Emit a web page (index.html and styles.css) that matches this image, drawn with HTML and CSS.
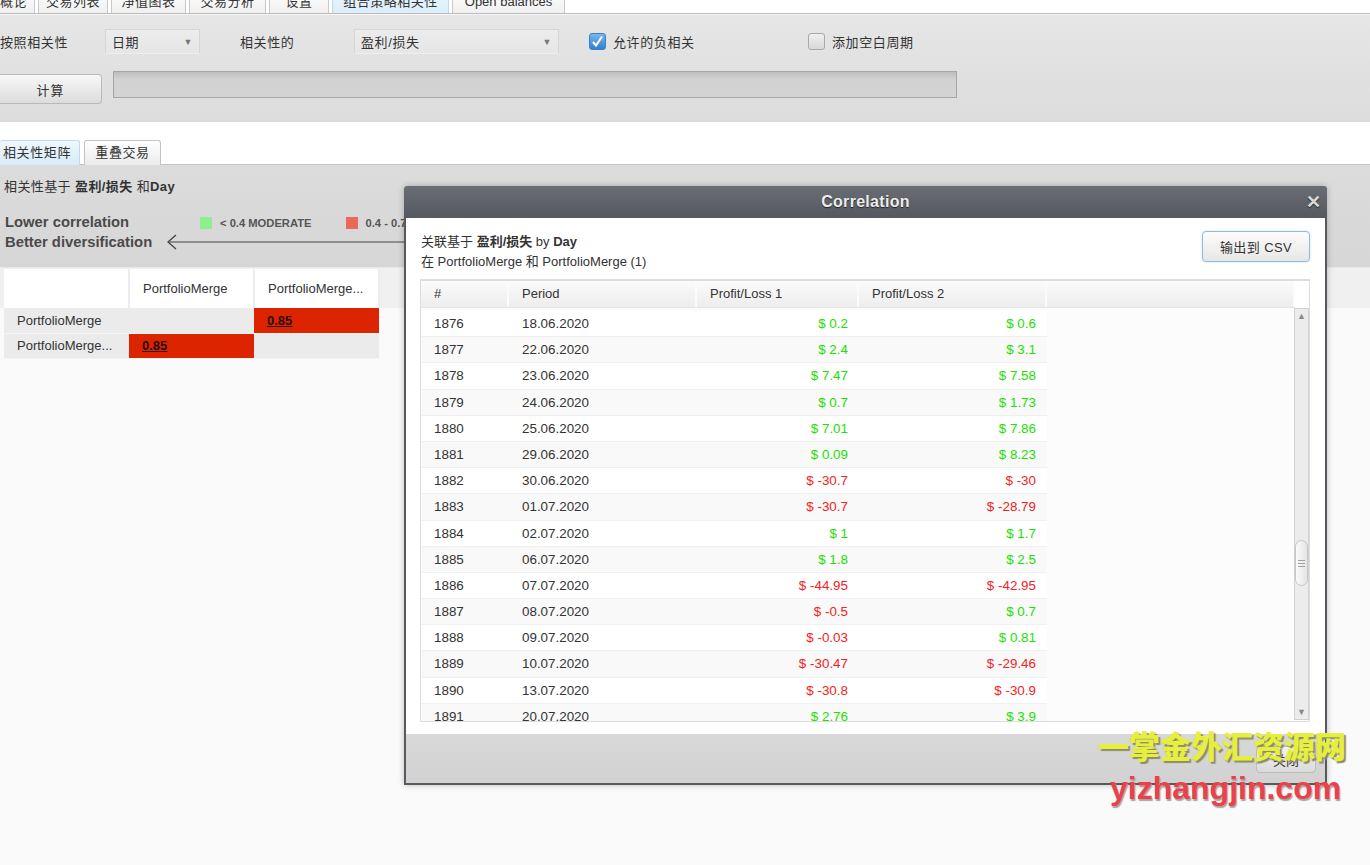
FILE: index.html
```html
<!DOCTYPE html>
<html lang="zh">

<head>
  <meta charset="UTF-8" />
  <title>Correlation</title>
  <link rel="stylesheet" href="styles.css">
</head>

<body>
  <div class="main-tabs">
    <div class="tab t1">概论</div>
    <div class="tab t2">交易列表</div>
    <div class="tab t3">净值图表</div>
    <div class="tab t4">交易分析</div>
    <div class="tab t5">设置</div>
    <div class="tab t6 active">组合策略相关性</div>
    <div class="tab t7">Open balances</div>
  </div>

  <div class="toolbar">
    <div class="tool-row">
      <span class="label label-by">按照相关性</span>
      <div class="select select-period">日期<span class="arrow">▼</span></div>
      <span class="label label-of">相关性的</span>
      <div class="select select-value">盈利/损失<span class="arrow">▼</span></div>
      <div class="check check-neg">
        <span class="box checked">
          <svg width="13" height="13" viewBox="0 0 13 13"><path d="M2 7 L5 10.5 L11 1.5" fill="none" stroke="#fff" stroke-width="2" /></svg>
        </span>
        允许的负相关
      </div>
      <div class="check">
        <span class="box"></span>
        添加空白周期
      </div>
    </div>
    <div class="tool-row">
      <button class="calc-button">计算</button>
      <div class="progress"></div>
    </div>
  </div>

  <div class="sub-tabs">
    <div class="sub-tab active">相关性矩阵</div>
    <div class="sub-tab">重叠交易</div>
  </div>

  <div class="info-panel">
    <p class="info-title">相关性基于 <b>盈利/损失</b> 和<b>Day</b></p>
    <div class="scale">
      <div class="scale-left">
        <div>Lower correlation</div>
        <div>Better diversification</div>
      </div>
      <div class="scale-right">
        <div class="legend">
          <span class="legend-item"><span class="swatch green"></span>&lt; 0.4 MODERATE</span>
          <span class="legend-item"><span class="swatch red"></span>0.4 - 0.7 HIGH</span>
          <span class="legend-item"><span class="swatch dark"></span>&gt; 0.7 VERY HIGH</span>
        </div>
        <svg class="scale-arrow" width="940" height="16" viewBox="0 0 940 16">
          <path d="M9 1 L1 8 L9 15" fill="none" stroke="#444" stroke-width="1.3" />
          <line x1="1" y1="8" x2="940" y2="8" stroke="#444" stroke-width="1.2" />
        </svg>
      </div>
    </div>
  </div>

  <div class="matrix-area">
    <table class="matrix">
      <tr class="matrix-head">
        <th></th>
        <th>PortfolioMerge</th>
        <th>PortfolioMerge...</th>
      </tr>
      <tr>
        <td>PortfolioMerge</td>
        <td></td>
        <td class="hot"><u>0.85</u></td>
      </tr>
      <tr>
        <td>PortfolioMerge...</td>
        <td class="hot"><u>0.85</u></td>
        <td></td>
      </tr>
    </table>
  </div>

  <div class="dialog">
    <div class="dialog-title">
      Correlation
      <span class="dialog-close">✕</span>
    </div>
    <div class="dialog-body">
      <div class="dialog-head">
        <div class="dialog-info">
          <div>关联基于 <b>盈利/损失</b> by <b>Day</b></div>
          <div>在 PortfolioMerge 和 PortfolioMerge (1)</div>
        </div>
        <button class="csv-button">输出到 CSV</button>
      </div>

      <div class="grid">
        <div class="grid-head">
          <div class="c-num">#</div>
          <div class="c-date">Period</div>
          <div class="c-pl">Profit/Loss 1</div>
          <div class="c-pl2">Profit/Loss 2</div>
          <div class="c-rest"></div>
        </div>
        <div class="grid-main">
          <div class="grid-rows" id="rows"></div>
          <div class="scrollbar">
            <span class="sb-up">▲</span>
            <span class="sb-thumb"><i></i><i></i><i></i></span>
            <span class="sb-down">▼</span>
          </div>
        </div>
      </div>
    </div>
    <div class="dialog-foot">
      <button class="close-button">关闭</button>
    </div>
  </div>

  <div class="watermark">
    <div class="wm-cn">一掌金外汇资源网</div>
    <div class="wm-en">yizhangjin.com</div>
  </div>

  <script>
    const data = [
      [1876, "18.06.2020", 0.2, 0.6],
      [1877, "22.06.2020", 2.4, 3.1],
      [1878, "23.06.2020", 7.47, 7.58],
      [1879, "24.06.2020", 0.7, 1.73],
      [1880, "25.06.2020", 7.01, 7.86],
      [1881, "29.06.2020", 0.09, 8.23],
      [1882, "30.06.2020", -30.7, -30],
      [1883, "01.07.2020", -30.7, -28.79],
      [1884, "02.07.2020", 1, 1.7],
      [1885, "06.07.2020", 1.8, 2.5],
      [1886, "07.07.2020", -44.95, -42.95],
      [1887, "08.07.2020", -0.5, 0.7],
      [1888, "09.07.2020", -0.03, 0.81],
      [1889, "10.07.2020", -30.47, -29.46],
      [1890, "13.07.2020", -30.8, -30.9],
      [1891, "20.07.2020", 2.76, 3.9]
    ];

    function money(v) {
      const cls = v < 0 ? 'neg' : 'pos';
      return '<span class="' + cls + '">$ ' + v + '</span>';
    }

    const rows = document.getElementById('rows');
    rows.innerHTML = data.map(r =>
      '<div class="grid-row">' +
      '<div class="c-num">' + r[0] + '</div>' +
      '<div class="c-date">' + r[1] + '</div>' +
      '<div class="c-pl">' + money(r[2]) + '</div>' +
      '<div class="c-pl2">' + money(r[3]) + '</div>' +
      '</div>'
    ).join('');
  </script>
</body>

</html>
```

FILE: styles.css
```css
* {
  margin: 0;
  padding: 0;
  box-sizing: border-box;
}

body {
  width: 1370px;
  height: 865px;
  overflow: hidden;
  position: relative;
  background: #fafafa;
  font-family: 'Liberation Sans', 'Noto Sans CJK SC', sans-serif;
  font-size: 13px;
  color: #333;
}

button {
  font-family: inherit;
  font-size: 13px;
  color: #333;
}

/* top tabs, scrolled half out of view */
.main-tabs {
  height: 14px;
  overflow: hidden;
  display: flex;
  align-items: flex-end;
  gap: 3px;
  background: #fff;
  border-bottom: 1px solid #bcbcbc;
}

.tab {
  height: 24px;
  line-height: 24px;
  border: 1px solid #c8c8c8;
  border-bottom: none;
  background: linear-gradient(#ffffff, #f0f0f0);
  text-align: center;
  color: #333;
  letter-spacing: 0.5px;
}

.tab.active {
  background: linear-gradient(#eaf5fd, #dbeefb);
  border-color: #c2d8e8;
}

.t1 { width: 35px; text-align: left; border-left: none; }
.t2 { width: 70px; }
.t3 { width: 75px; }
.t4 { width: 77px; }
.t5 { width: 60px; }
.t6 { width: 117px; }
.t7 { width: 113px; letter-spacing: 0; }

/* toolbar */
.toolbar {
  height: 108px;
  padding-top: 14px;
  border-top: 1px solid #f6f6f6;
  background: linear-gradient(#e6e6e6, #dcdcdc);
}

.tool-row {
  display: flex;
  align-items: center;
}

.tool-row + .tool-row {
  margin-top: 17px;
  align-items: flex-start;
}

.label {
  letter-spacing: 0.6px;
  color: #333;
}

.label-by { width: 105px; }
.label-of { width: 114px; }

.select {
  height: 25px;
  line-height: 25px;
  padding-left: 6px;
  position: relative;
  background: linear-gradient(#ececec, #e6e6e6);
  border: 1px solid #d6d6d6;
  border-bottom-color: #eeeeee;
  letter-spacing: 0.6px;
}

.select .arrow {
  position: absolute;
  right: 6px;
  top: 0;
  font-size: 9px;
  color: #777;
}

.select-period {
  width: 95px;
  margin-right: 40px;
}

.select-value {
  width: 205px;
  margin-right: 30px;
}

.check {
  display: flex;
  align-items: center;
  gap: 7px;
  width: 219px;
  letter-spacing: 0.6px;
}

.box {
  width: 17px;
  height: 17px;
  border-radius: 3px;
  border: 1px solid #a9a9a9;
  background: linear-gradient(#f0f0f0, #d8d8d8);
  display: flex;
  align-items: center;
  justify-content: center;
}

.box.checked {
  border-color: #3d7fc4;
  background: linear-gradient(#79b6ec, #2f80d2);
}

.calc-button {
  width: 102px;
  height: 30px;
  margin-top: 3px;
  border: 1px solid #b9b9b9;
  border-left: none;
  border-radius: 0 4px 4px 0;
  background: linear-gradient(#f8f8f8, #dcdcdc);
  letter-spacing: 1px;
}

.progress {
  width: 844px;
  height: 27px;
  margin-left: 11px;
  border: 1px solid #a6a6a6;
  background: linear-gradient(#bdbdbd, #d2d2d2 30%, #d4d4d4);
}

/* sub tabs */
.sub-tabs {
  height: 43px;
  padding-top: 18px;
  display: flex;
  gap: 4px;
  background: #fff;
  border-bottom: 1px solid #c4c4c4;
}

.sub-tab {
  height: 25px;
  line-height: 24px;
  width: 77px;
  text-align: center;
  border: 1px solid #c4c4c4;
  border-bottom: none;
  border-radius: 3px 3px 0 0;
  background: linear-gradient(#ffffff, #ebebeb);
  letter-spacing: 0.6px;
}

.sub-tab.active {
  width: 80px;
  text-align: left;
  padding-left: 3px;
  border-left: none;
  border-color: #c4d8e6;
  background: linear-gradient(#eef7fd, #d8ebf8);
}

/* info panel */
.info-panel {
  height: 103px;
  padding: 13px 0 0 4px;
  background: linear-gradient(#dcdcdc, #d6d6d6);
  border-bottom: 1px solid #e9e9e9;
}

.info-title {
  line-height: 18px;
  letter-spacing: 0.4px;
}

.scale {
  display: flex;
  margin-top: 16px;
}

.scale-left {
  width: 163px;
  font-size: 14.8px;
  font-weight: bold;
  color: #4a4a4a;
  line-height: 20px;
  padding-left: 1px;
}

.scale-right {
  flex: 1;
}

.legend {
  height: 22px;
  display: flex;
  align-items: center;
  gap: 34px;
  padding-left: 33px;
}

.legend-item {
  display: flex;
  align-items: center;
  gap: 8px;
  font-size: 11.2px;
  font-weight: bold;
  color: #555;
}

.swatch {
  width: 12px;
  height: 12px;
}

.swatch.green { background: #8ef08c; }
.swatch.red { background: #e96a58; }
.swatch.dark { background: #d22a10; }

.scale-arrow {
  display: block;
  margin-top: 0;
}

/* correlation matrix */
.matrix-area {
  padding: 1px 0 0 4px;
  background: linear-gradient(#f0f0f0 0, #f0f0f0 40px, #fafafa 40px);
  height: 200px;
}

.matrix {
  border-collapse: collapse;
}

.matrix th,
.matrix td {
  width: 125px;
  text-align: left;
  font-weight: normal;
  padding-left: 13px;
  white-space: nowrap;
  color: #333;
}

.matrix th {
  height: 39px;
  background: #fff;
  border-right: 2px solid #ececec;
}

.matrix td {
  height: 25px;
  background: #ebebeb;
  border-bottom: 1px solid #f4f4f4;
}

.matrix td.hot {
  background: #dc2500;
  font-weight: bold;
  color: #2a0a02;
}

/* dialog window */
.dialog {
  position: absolute;
  left: 404px;
  top: 186px;
  width: 923px;
  height: 599px;
  border: 2px solid #56595e;
  border-top: none;
  border-radius: 4px 4px 0 0;
  background: #fff;
  box-shadow: 0 0 6px rgba(0, 0, 0, 0.25);
  display: flex;
  flex-direction: column;
}

.dialog-title {
  height: 32px;
  margin: 0 -2px;
  line-height: 32px;
  text-align: center;
  border-radius: 4px 4px 0 0;
  background: linear-gradient(#6a6d73, #55585e);
  color: #ececec;
  font-size: 16px;
  font-weight: bold;
  letter-spacing: 0.3px;
  text-shadow: 0 1px 1px #222;
  position: relative;
}

.dialog-close {
  position: absolute;
  right: 6px;
  top: 0;
  font-size: 18px;
  color: #d8d8d8;
}

.dialog-body {
  flex: 1;
  padding: 13px 15px 0 14px;
}

.dialog-head {
  display: flex;
  justify-content: space-between;
  height: 48px;
}

.dialog-info {
  padding-top: 1px;
  line-height: 20px;
  padding-left: 1px;
}

.csv-button {
  width: 108px;
  height: 31px;
  border: 1px solid #93bbdd;
  border-radius: 4px;
  background: linear-gradient(#fdfdfd, #e6e6e6);
  box-shadow: 0 0 2px #b8d4ee;
  letter-spacing: 0.4px;
}

.grid {
  width: 890px;
  border: 1px solid #dddddd;
  border-top-width: 2px;
}

.grid-head {
  display: flex;
  height: 27px;
  width: 874px;
  line-height: 26px;
  background: linear-gradient(#fbfbfb, #ededed);
  border-bottom: 1px solid #e4e4e4;
}

.grid-head > div {
  padding-left: 13px;
  border-right: 2px solid #fbfbfb;
}

.c-num { width: 88px; }
.c-date { width: 188px; }
.c-pl { width: 162px; }
.c-pl2 { width: 188px; }
.c-rest { flex: 1; }

.grid-main {
  display: flex;
  height: 413px;
  background: #fcfcfc;
}

.grid-rows {
  width: 874px;
  height: 413px;
  padding-top: 3px;
  overflow: hidden;
}

.grid-row {
  display: flex;
  width: 626px;
  height: 26.2px;
  line-height: 25px;
  border-bottom: 1px solid #f0f0f0;
  background: #fff;
  font-size: 13.4px;
}

.grid-row:nth-child(even) {
  background: #f9f9f9;
}

.grid-row .c-num,
.grid-row .c-date {
  padding-left: 13px;
}

.grid-row .c-pl,
.grid-row .c-pl2 {
  text-align: right;
  padding-right: 11px;
}

.pos { color: #22e000; }
.neg { color: #f42222; }

.scrollbar {
  width: 15px;
  height: 412px;
  background: #ececec;
  border: 1px solid #d2d2d2;
  position: relative;
  color: #8a8a8a;
  font-size: 9px;
  text-align: center;
}

.sb-up,
.sb-down {
  position: absolute;
  left: 0;
  right: 0;
}

.sb-up { top: 2px; }
.sb-down { bottom: 2px; }

.sb-thumb {
  position: absolute;
  left: 0;
  top: 231px;
  width: 13px;
  height: 46px;
  border: 1px solid #c6c6c6;
  border-radius: 7px;
  background: linear-gradient(to right, #fafafa, #e4e4e4);
  display: flex;
  flex-direction: column;
  justify-content: center;
  align-items: center;
  gap: 2px;
}

.sb-thumb i {
  display: block;
  width: 7px;
  height: 1px;
  background: #a0a0a0;
}

.dialog-foot {
  height: 49px;
  padding: 12px 9px 0 0;
  display: flex;
  justify-content: flex-end;
  background: linear-gradient(#d8d8d8, #d2d2d2);
}

.close-button {
  width: 60px;
  height: 27px;
  border: 1px solid #bcbcbc;
  border-radius: 4px;
  background: linear-gradient(#f4f4f4, #dadada);
}

/* watermark over the screenshot */
.watermark {
  position: absolute;
  left: 1098px;
  top: 723px;
  font-weight: bold;
}

.wm-cn {
  font-family: 'Noto Sans CJK SC', sans-serif;
  font-size: 31px;
  font-weight: 900;
  line-height: 44px;
  color: #e6ee3e;
  text-shadow: 2px 2px 1px #8c8c6c;
}

.wm-en {
  margin-left: 12px;
  margin-top: 2px;
  font-family: 'Liberation Sans', sans-serif;
  font-size: 32px;
  line-height: 38px;
  color: #e8424c;
  text-shadow: 1px 2px 1px #b0a0a0;
}
```
